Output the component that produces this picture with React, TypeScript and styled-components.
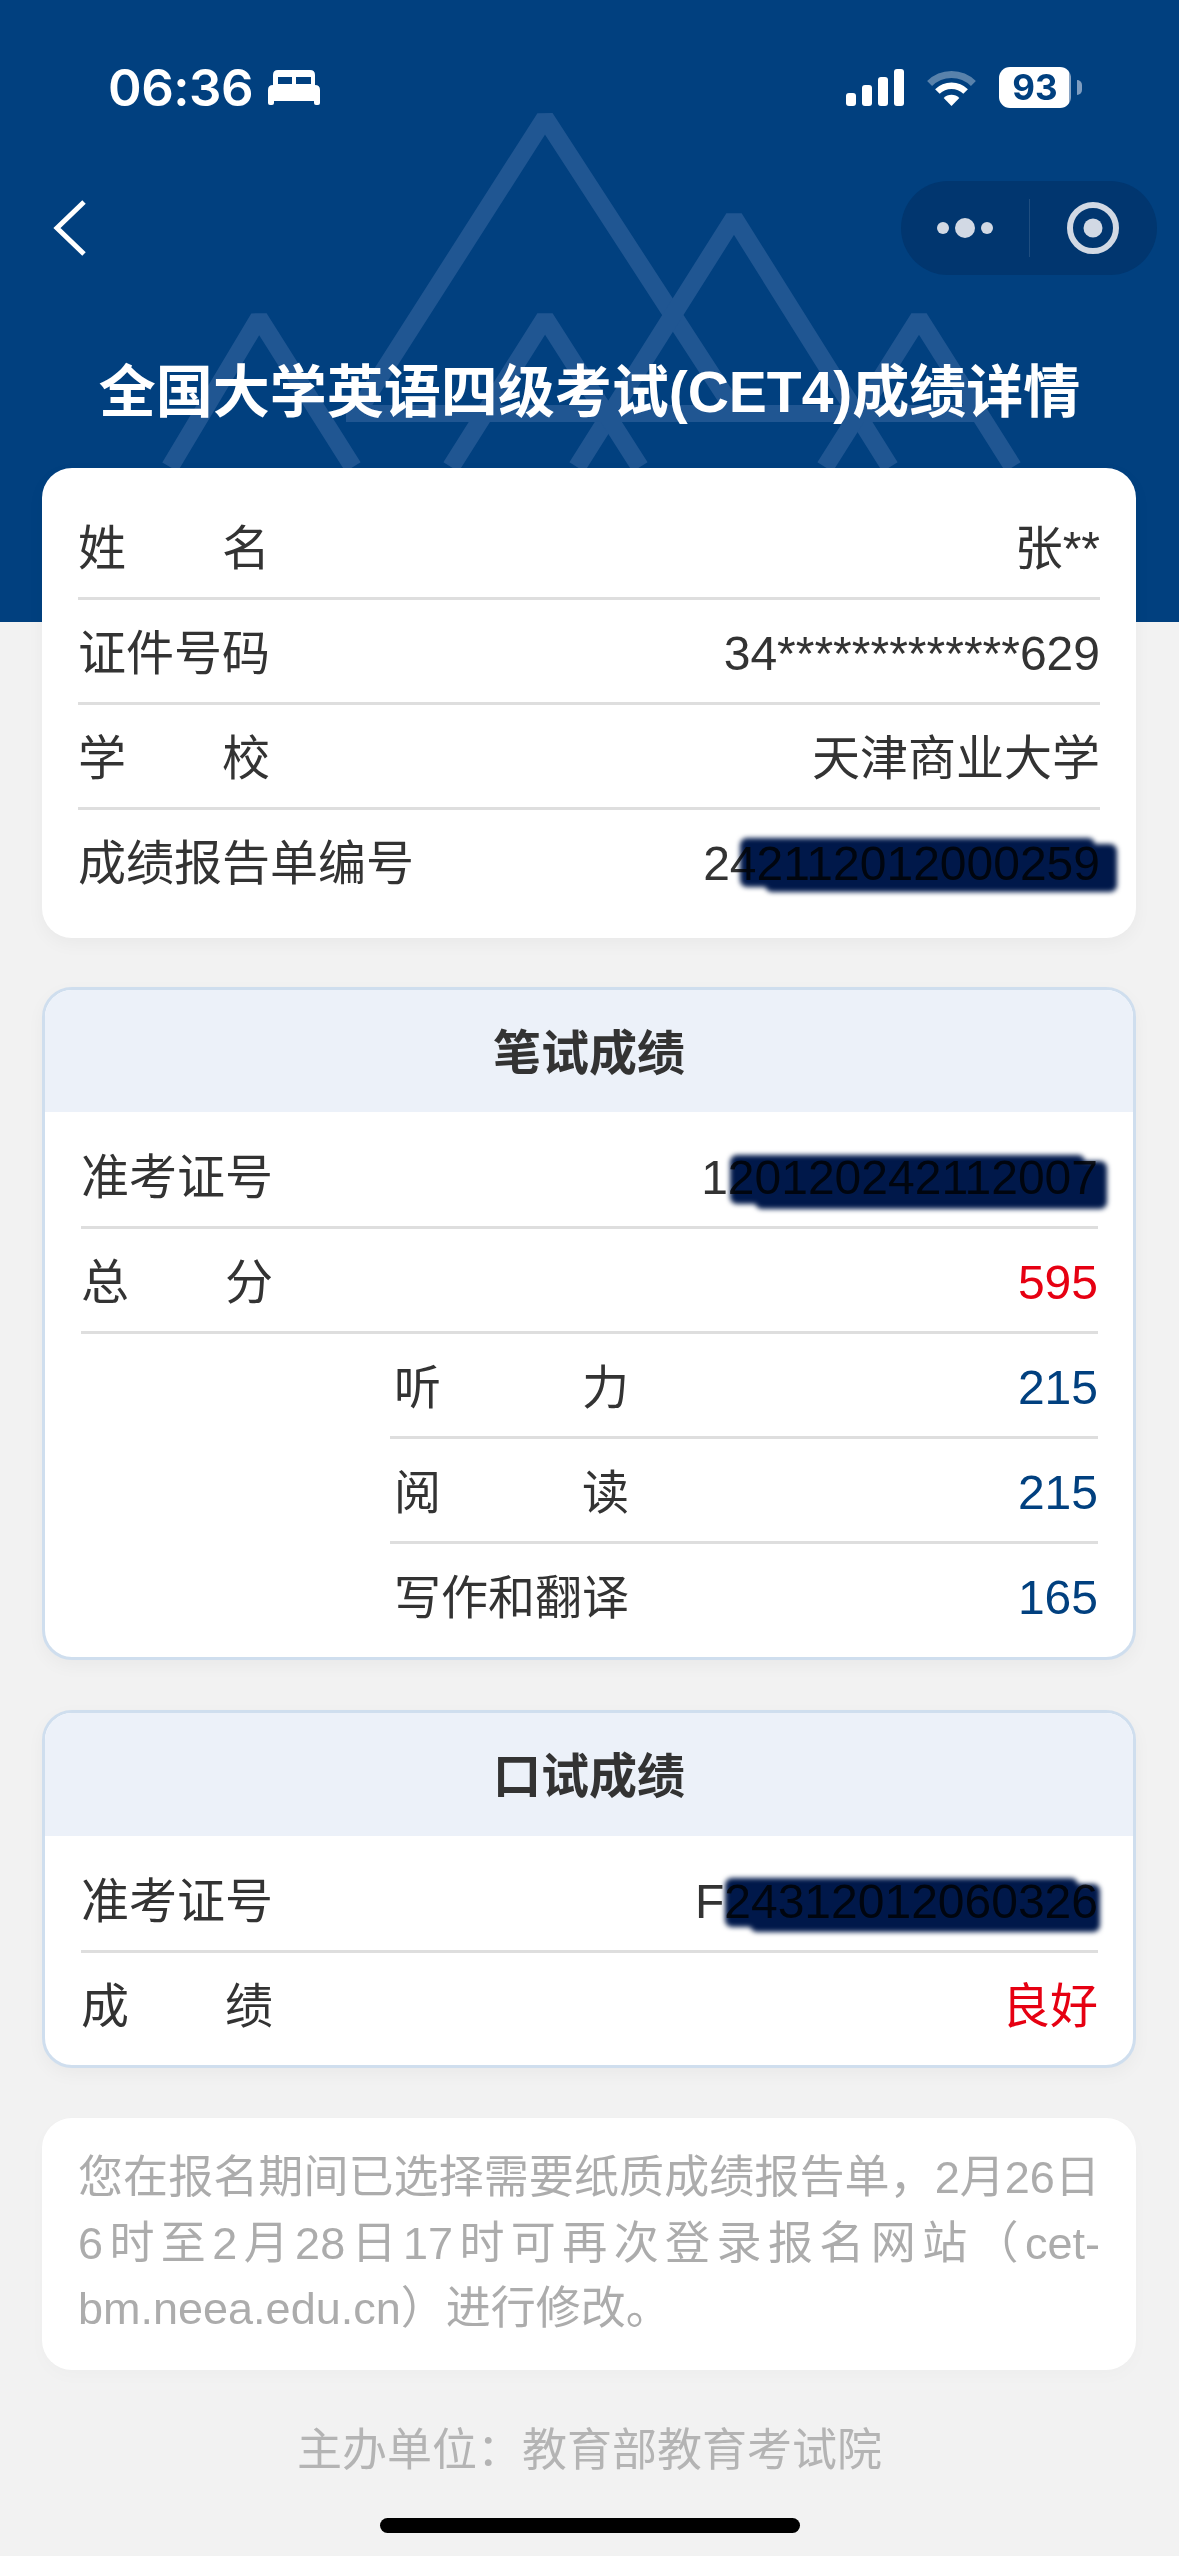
import React from 'react';
import styled, { createGlobalStyle } from 'styled-components';

const FONT = '"Liberation Sans", "Noto Sans CJK SC", sans-serif';
const BLUE = '#01407f';

const GlobalStyle = createGlobalStyle`
  html, body {
    margin: 0;
    padding: 0;
    background: #f2f2f2;
  }
  * {
    box-sizing: border-box;
  }
`;

const Page = styled.div`
  position: relative;
  width: 1179px;
  height: 2556px;
  overflow: hidden;
  background: #f2f2f2;
  font-family: ${FONT};
  color: #333;
`;

const Hero = styled.header`
  position: relative;
  height: 622px;
  padding-top: 60px;
  background: ${BLUE};
`;

const Mountains = styled.svg`
  position: absolute;
  left: 0;
  top: 0;
`;

const StatusBar = styled.div`
  position: relative;
  display: flex;
  align-items: center;
  justify-content: space-between;
  height: 55px;
  padding: 0 108px 0 108px;
  color: #fff;
`;

const StatusGroup = styled.div`
  display: flex;
  align-items: center;
`;

const Clock = styled.span`
  font-family: Inter, sans-serif;
  font-size: 51px;
  font-weight: 600;
  line-height: 55px;
  letter-spacing: -0.5px;
  margin-right: 15px;
`;

const Battery = styled.div`
  position: relative;
  width: 72px;
  height: 41px;
  margin-left: 23px;
  border-radius: 11px;
  background: linear-gradient(90deg, #fff 97%, #8aa5c4 97%);
  color: ${BLUE};
  font-family: Inter, sans-serif;
  font-size: 35px;
  font-weight: 700;
  line-height: 41px;
  text-align: center;

  &::after {
    content: '';
    position: absolute;
    right: -11px;
    top: 13px;
    width: 5px;
    height: 15px;
    border-radius: 0 8px 8px 0;
    background: #7f9dc0;
  }
`;

const NavBar = styled.nav`
  position: relative;
  display: flex;
  align-items: center;
  justify-content: space-between;
  height: 94px;
  margin-top: 66px;
  padding: 0 22px 0 52px;
`;

const Capsule = styled.div`
  display: flex;
  align-items: center;
  width: 256px;
  height: 94px;
  border-radius: 47px;
  background: #01366f;
`;

const CapsuleCell = styled.div`
  display: flex;
  flex: 1;
  align-items: center;
  justify-content: center;
`;

const CapsuleDivider = styled.div`
  width: 1px;
  height: 58px;
  background: rgba(255, 255, 255, 0.12);
`;

const Title = styled.h1`
  position: relative;
  margin: 77px 0 0;
  color: #fff;
  font-size: 57px;
  font-weight: 700;
  line-height: 80px;
  text-align: center;
`;

const Main = styled.main`
  position: relative;
  margin-top: -154px;
  padding: 0 43px 0 42px;
`;

const InfoCard = styled.section`
  padding: 27px 36px 26px;
  border-radius: 30px;
  background: #fff;
  box-shadow: 0 6px 18px rgba(0, 0, 0, 0.04);
`;

const ScoreCard = styled.section<{ $gap: number }>`
  margin-top: ${(p) => p.$gap}px;
  overflow: hidden;
  border: 3px solid #cfdeee;
  border-radius: 30px;
  background: #fff;
  box-shadow: 0 6px 18px rgba(0, 0, 0, 0.04);
`;

const ScoreHeader = styled.h2<{ $height: number }>`
  display: flex;
  align-items: center;
  justify-content: center;
  height: ${(p) => p.$height}px;
  margin: 0;
  padding-bottom: 5px;
  background: #ecf1f9;
  color: #333;
  font-size: 48px;
  font-weight: 700;
`;

const ScoreBody = styled.div<{ $bottom: number }>`
  padding: 12px 35px ${(p) => p.$bottom}px 36px;
`;

const Row = styled.div<{ $indent?: number }>`
  display: flex;
  align-items: center;
  justify-content: space-between;
  height: 105px;
  margin-left: ${(p) => p.$indent || 0}px;
  padding-top: 5px;
  border-bottom: 3px solid #dedede;

  &:last-child {
    height: 102px;
    border-bottom: 0;
  }
`;

const Label = styled.span<{ $free?: boolean; $sub?: boolean }>`
  display: block;
  width: ${(p) => (p.$free ? 'auto' : p.$sub ? '235px' : '192px')};
  margin-left: ${(p) => (p.$sub ? '4px' : '0')};
  font-size: ${(p) => (p.$sub ? '47px' : '48px')};
  line-height: 58px;
  text-align-last: ${(p) => (p.$free ? 'left' : 'justify')};
`;

const Value = styled.span<{ $tone?: 'red' | 'blue' }>`
  position: relative;
  font-size: 48px;
  line-height: 58px;
  color: ${(p) => (p.$tone === 'red' ? '#e60012' : p.$tone === 'blue' ? BLUE : '#333')};
`;

// 打码的涂抹痕迹，两笔叠在一起
const Smudge = styled.i<{ $top: number; $right: number; $width: number }>`
  position: absolute;
  top: ${(p) => p.$top}px;
  right: ${(p) => p.$right}px;
  width: ${(p) => p.$width}px;
  height: 54px;
  mix-blend-mode: multiply;
  filter: blur(2.4px);

  &::before,
  &::after {
    content: '';
    position: absolute;
    border-radius: 7px;
    background: #00184a;
  }
  &::before {
    left: 0;
    right: 22px;
    top: 0;
    bottom: 5px;
  }
  &::after {
    left: 25px;
    right: 0;
    top: 6px;
    bottom: 0;
  }
`;

const Notice = styled.section`
  margin-top: 50px;
  padding: 27px 36px 28px;
  border-radius: 30px;
  background: #fff;
  box-shadow: 0 6px 18px rgba(0, 0, 0, 0.02);
  color: #acacac;
  font-size: 45px;
  line-height: 65.5px;
  text-align: justify;
`;

const Footer = styled.footer`
  margin-top: 51px;
  color: #b4b4b4;
  font-size: 45px;
  line-height: 60px;
  text-align: center;
`;

const HomeBar = styled.div`
  width: 420px;
  height: 15px;
  margin: 37px auto 0;
  border-radius: 8px;
  background: #000;
`;

const MountainArt = () => (
  <Mountains width="1179" height="622" viewBox="0 0 1179 622" fill="none" stroke="#205692" strokeWidth="18" strokeLinejoin="bevel">
    <path d="M356 414 L545 118 L737 414" />
    <path d="M577 467 L734 218 L890 467" />
    <path d="M170 467 L259 318 L353 467" />
    <path d="M451 467 L545 318 L640 467" />
    <path d="M825 467 L919 318 L1013 467" />
    <path d="M346 413.5 H985" strokeWidth="17" />
  </Mountains>
);

const BedIcon = () => (
  <svg width="52" height="35" viewBox="0 0 52 35" fill="#fff">
    <path
      fillRule="evenodd"
      d="M5 16 V5 Q5 0 10 0 H42 Q47 0 47 5 V16 Z M10 7 V14 H24 V7 Z M28 7 V14 H43 V7 Z"
    />
    <path d="M0 20 Q0 15 5 15 H47 Q52 15 52 20 V33 Q52 35 50 35 H48 Q46 35 46 33 V31 H6 V33 Q6 35 4 35 H2 Q0 35 0 33 Z" />
  </svg>
);

const SignalIcon = () => (
  <svg width="58" height="37" viewBox="0 0 58 37" fill="#fff">
    <rect x="0" y="24" width="10" height="13" rx="3" />
    <rect x="16" y="16" width="10" height="21" rx="3" />
    <rect x="32" y="8" width="10" height="29" rx="3" />
    <rect x="48" y="0" width="10" height="37" rx="3" />
  </svg>
);

const WifiIcon = () => (
  <svg width="49" height="37" viewBox="0 0 49 37" fill="none" style={{ marginLeft: 23 }}>
    <path d="M2.6 14.5 A31 31 0 0 1 46.4 14.5" stroke="#fff" strokeOpacity="0.35" strokeWidth="7" />
    <path d="M10.4 22.5 A20 20 0 0 1 38.6 22.5" stroke="#fff" strokeWidth="6.5" />
    <path d="M24.5 37 L16.7 29 A11 11 0 0 1 32.3 29 Z" fill="#fff" />
  </svg>
);

const BackIcon = () => (
  <svg width="36" height="56" viewBox="0 0 36 56" fill="none" stroke="#fff" strokeWidth="5">
    <path d="M32 2 L5 28 L32 54" strokeLinejoin="miter" />
  </svg>
);

const MoreIcon = () => (
  <svg width="58" height="22" viewBox="0 0 58 22" fill="#d2d9e4">
    <circle cx="7" cy="11" r="6" />
    <circle cx="29" cy="11" r="10" />
    <circle cx="51" cy="11" r="6" />
  </svg>
);

const TargetIcon = () => (
  <svg width="52" height="52" viewBox="0 0 52 52" fill="none">
    <circle cx="26" cy="26" r="23" stroke="#d2d9e4" strokeWidth="6" />
    <circle cx="26" cy="26" r="9.5" fill="#d2d9e4" />
  </svg>
);

export default function App() {
  return (
    <Page>
      <GlobalStyle />
      <Hero>
        <MountainArt />
        <StatusBar>
          <StatusGroup>
            <Clock>06:36</Clock>
            <BedIcon />
          </StatusGroup>
          <StatusGroup>
            <SignalIcon />
            <WifiIcon />
            <Battery>93</Battery>
          </StatusGroup>
        </StatusBar>
        <NavBar>
          <BackIcon />
          <Capsule>
            <CapsuleCell>
              <MoreIcon />
            </CapsuleCell>
            <CapsuleDivider />
            <CapsuleCell>
              <TargetIcon />
            </CapsuleCell>
          </Capsule>
        </NavBar>
        <Title>全国大学英语四级考试(CET4)成绩详情</Title>
      </Hero>

      <Main>
        <InfoCard>
          <Row>
            <Label>姓 名</Label>
            <Value>张**</Value>
          </Row>
          <Row>
            <Label>证件号码</Label>
            <Value>34*************629</Value>
          </Row>
          <Row>
            <Label>学 校</Label>
            <Value>天津商业大学</Value>
          </Row>
          <Row>
            <Label $free>成绩报告单编号</Label>
            <Value>
              242112012000259
              <Smudge $top={3} $right={-17} $width={377} />
            </Value>
          </Row>
        </InfoCard>

        <ScoreCard $gap={49}>
          <ScoreHeader $height={122}>笔试成绩</ScoreHeader>
          <ScoreBody $bottom={11}>
            <Row>
              <Label>准考证号</Label>
              <Value>
                120120242112007
                <Smudge $top={6} $right={-9} $width={377} />
              </Value>
            </Row>
            <Row>
              <Label>总 分</Label>
              <Value $tone="red">595</Value>
            </Row>
            <Row $indent={309}>
              <Label $sub>听 力</Label>
              <Value $tone="blue">215</Value>
            </Row>
            <Row $indent={309}>
              <Label $sub>阅 读</Label>
              <Value $tone="blue">215</Value>
            </Row>
            <Row $indent={309}>
              <Label $sub>写作和翻译</Label>
              <Value $tone="blue">165</Value>
            </Row>
          </ScoreBody>
        </ScoreCard>

        <ScoreCard $gap={50}>
          <ScoreHeader $height={123}>口试成绩</ScoreHeader>
          <ScoreBody $bottom={10}>
            <Row>
              <Label>准考证号</Label>
              <Value>
                F24312012060326
                <Smudge $top={5} $right={-2} $width={375} />
              </Value>
            </Row>
            <Row>
              <Label>成 绩</Label>
              <Value $tone="red">良好</Value>
            </Row>
          </ScoreBody>
        </ScoreCard>

        <Notice>
          您在报名期间已选择需要纸质成绩报告单，2月26日6时至2月28日17时可再次登录报名网站（cet-bm.neea.edu.cn）进行修改。
        </Notice>
      </Main>

      <Footer>主办单位：教育部教育考试院</Footer>
      <HomeBar />
    </Page>
  );
}
